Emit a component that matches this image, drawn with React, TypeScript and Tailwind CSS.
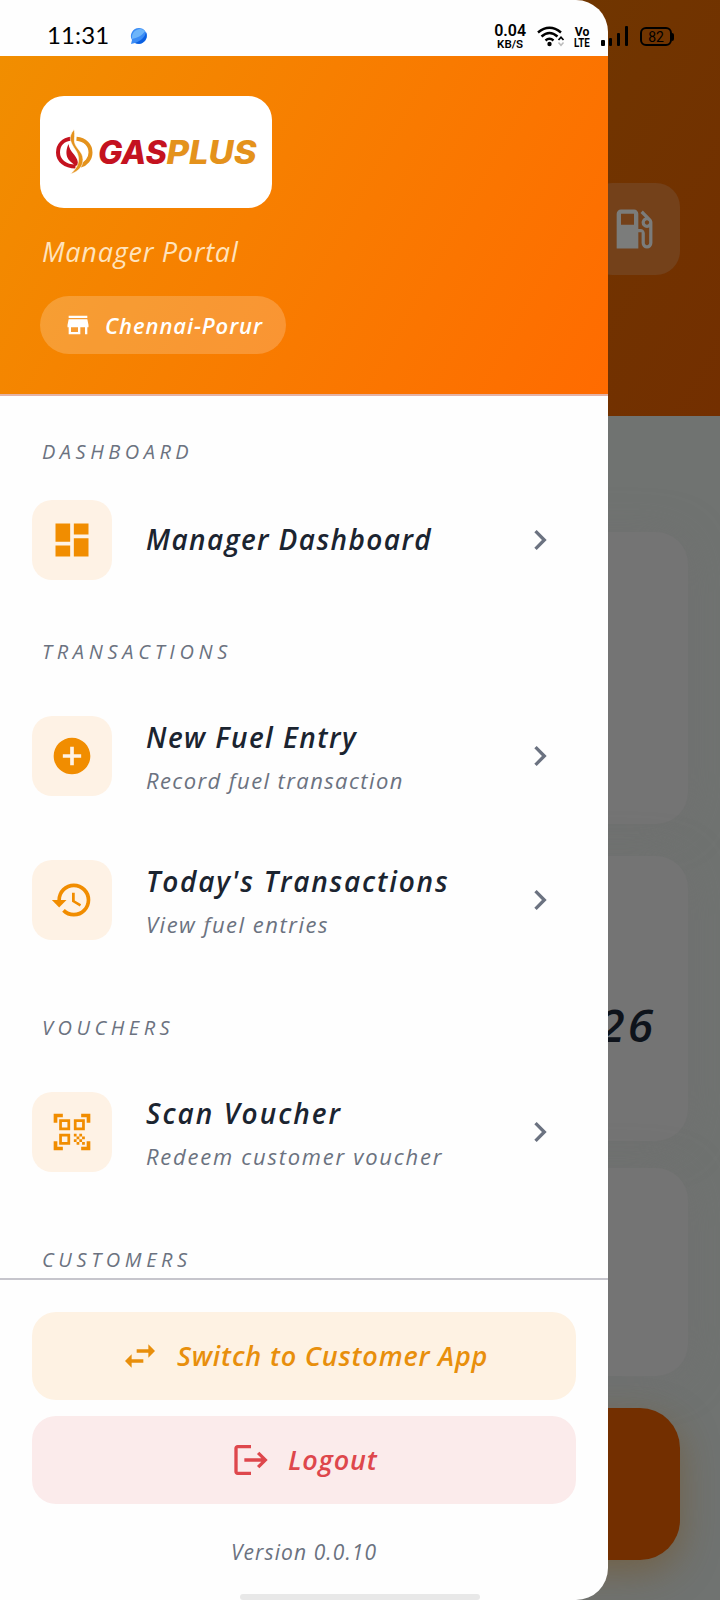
import type { ReactNode } from "react";
import clsx from "clsx";
import type { IconType } from "react-icons";
import {
  MdAddCircle,
  MdChevronRight,
  MdDashboard,
  MdHistory,
  MdLocalGasStation,
  MdLogout,
  MdQrCodeScanner,
  MdStore,
  MdSwapHoriz
} from "react-icons/md";

type MenuItem = {
  title: string;
  titleTracking: string;
  subtitle?: string;
  subtitleTracking?: string;
  icon: IconType;
};

type MenuSection = {
  heading: string;
  tracking: string;
  items: MenuItem[];
};

const sections: MenuSection[] = [
  {
    heading: "DASHBOARD",
    tracking: "tracking-[4.5px]",
    items: [{ title: "Manager Dashboard", titleTracking: "tracking-[1.4px]", icon: MdDashboard }]
  },
  {
    heading: "TRANSACTIONS",
    tracking: "tracking-[4.7px]",
    items: [
      {
        title: "New Fuel Entry",
        titleTracking: "tracking-[1.45px]",
        subtitle: "Record fuel transaction",
        subtitleTracking: "tracking-[1.4px]",
        icon: MdAddCircle
      },
      {
        title: "Today's Transactions",
        titleTracking: "tracking-[1.8px]",
        subtitle: "View fuel entries",
        subtitleTracking: "tracking-[1.5px]",
        icon: MdHistory
      }
    ]
  },
  {
    heading: "VOUCHERS",
    tracking: "tracking-[4.5px]",
    items: [
      {
        title: "Scan Voucher",
        titleTracking: "tracking-[2px]",
        subtitle: "Redeem customer voucher",
        subtitleTracking: "tracking-[1.75px]",
        icon: MdQrCodeScanner
      }
    ]
  },
  { heading: "CUSTOMERS", tracking: "tracking-[4.6px]", items: [] }
];

function GasPlusLogo() {
  return (
    <svg viewBox="0 0 204 48" className="h-12 w-[204px]" aria-label="GASPLUS">
      <path d="M17.5 10.500C9 11.500 4 17 4 24.500C4 32.500 11 38.500 21.500 38.500" fill="none" stroke="#c4121f" strokeWidth="4" />
      <path
        d="M14.500 16c-2.500 5-3 11 0 15.500 2 2.800 4.500 4 7 6.500l2.500-1c.5-4-1.500-7-4-10.500-3-3.300-5-6.500-5.500-10.500z"
        fill="#c4121f"
      />
      <path d="M22.500 10.800C31 11.500 36.500 17 36.500 24.500C36.500 31 32 36 26.500 37.500" fill="none" stroke="#e4921c" strokeWidth="4" />
      <path
        d="M20 1.500c-3.500 4-4.500 8-3 12.500 2 6 7 9 7.500 16.500.3 6-2.500 10.500-8 15.500 8-2.500 12.500-7.500 12.500-14.500 0-8-7.500-11-8.500-17.500-.6-4 1-7-.5-12.500z"
        fill="#e4921c"
        stroke="#fff"
        strokeWidth="0.6"
      />
      <text
        x="44"
        y="36"
        textLength="69"
        lengthAdjust="spacingAndGlyphs"
        className="fill-[#c4121f] font-['Inter'] text-[32px] font-extrabold italic"
      >
        GAS
      </text>
      <text
        x="112.500"
        y="36"
        textLength="90"
        lengthAdjust="spacingAndGlyphs"
        className="fill-[#e4921c] font-['Inter'] text-[32px] font-extrabold italic"
      >
        PLUS
      </text>
    </svg>
  );
}

function StatusBar() {
  return (
    <div className="absolute inset-x-0 top-0 z-20 flex h-14 items-start text-black">
      <span className="ml-[47px] mt-[19px] w-[62px] font-['Lato',sans-serif] text-[24px] leading-8 tracking-[0.1px]">
        11:31
      </span>
      <svg viewBox="0 0 18 18" className="ml-[21px] mt-[27px] size-[18px]">
        <path d="M9 1a8 8 0 1 1-4 15l-4 1 1-4A8 8 0 0 1 9 1z" fill="#3b8cf5" />
        <path d="M16 5c-1 6-6 9-11 11 7 3 14-4 11-11z" fill="#0b5fe0" />
        <path d="M2 9a8 8 0 0 1 13-5C12 9 7 11 2 12z" fill="#6db5fa" />
      </svg>
      <div className="ml-auto mr-[46px] flex items-start">
        <div className="mt-[22px] w-9 text-center font-['Roboto',sans-serif] font-semibold">
          <p className="text-[16px] leading-[17px]">0.04</p>
          <p className="text-[11.500px] leading-[10px]">KB/S</p>
        </div>
        <svg viewBox="0 0 28 21" className="ml-[9px] mt-[26px] h-[21px] w-7" fill="none">
          <path
            d="M1 6.500Q12.500-3 24 6.500M4.500 10.500q8-7 16 0M8.500 14.500q4-3.500 8 0"
            stroke="currentColor"
            strokeWidth="2.500"
          />
          <circle cx="12.500" cy="18" r="2.200" fill="currentColor" />
          <path d="m21.500 14 2.500-2.800 2.500 2.800" stroke="currentColor" strokeWidth="1.700" />
          <path d="m21.500 16.500 2.500 2.800 2.500-2.800" stroke="#bbb" strokeWidth="1.500" />
        </svg>
        <div className="ml-[8px] mt-[26px] flex w-[18px] flex-col items-center font-['Roboto',sans-serif] text-[13.500px] font-bold leading-[10.500px]">
          <span className="scale-x-90">Vo</span>
          <span className="scale-x-[0.72]">LTE</span>
        </div>
        <div className="ml-[10px] mt-[26px] flex h-5 items-end gap-[4.300px]">
          <span className="h-1.5 w-[3.500px] rounded-[1px] bg-black" />
          <span className="h-2 w-[3.500px] rounded-[1px] bg-black" />
          <span className="h-[13px] w-[3.500px] rounded-[1px] bg-black" />
          <span className="h-5 w-[3.500px] rounded-[1px] bg-black" />
        </div>
        <div className="ml-3 mt-[27px] flex items-center">
          <span className="flex h-[19px] w-[32px] items-center justify-center rounded-[6px] border-2 border-black font-['Roboto',sans-serif] text-[14px] leading-none">
            82
          </span>
          <span className="h-2 w-[2px] rounded-r-full bg-black" />
        </div>
      </div>
    </div>
  );
}

// Dashboard screen that stays visible behind the drawer scrim
function DimmedDashboard() {
  return (
    <div className="flex h-full flex-col items-end bg-[#707371]">
      <div className="flex h-[416px] w-full justify-end bg-linear-[120deg] from-[#6c4000] to-[#732f00] pr-10 pt-[183px]">
        <div className="flex h-[92px] w-[92px] items-center justify-center rounded-3xl bg-[#74411a] text-[#7b7c7b]">
          <MdLocalGasStation className="size-[52px]" />
        </div>
      </div>
      <div className="mr-8 mt-[116px] h-[292px] w-[656px] rounded-[32px] bg-[#747474] shadow-[0_4px_40px_rgba(112,112,112,0.9)]" />
      <div className="mr-8 mt-8 flex h-[285px] w-[656px] items-end justify-end rounded-[32px] bg-[#747474] pb-[87px] pr-8 shadow-[0_4px_40px_rgba(112,112,112,0.9)]">
        <span className="font-['Open_Sans',sans-serif] text-[46px] font-semibold italic leading-[60px] tracking-[3px] text-[#0e131b]">
          26
        </span>
      </div>
      <div className="mr-8 mt-[27px] h-[208px] w-[656px] rounded-[32px] bg-[#747474] shadow-[0_4px_40px_rgba(112,112,112,0.9)]" />
      <div className="mr-10 mt-8 h-[152px] w-[640px] rounded-[40px] bg-[#732f00] shadow-[0_12px_36px_rgba(115,80,30,0.5)]" />
    </div>
  );
}

function DrawerHeader() {
  return (
    <header className="h-[340px] border-b-2 border-[#e2b3a8] bg-linear-[119deg] from-[#f18e00] to-[#ff6b00] px-10 pt-10">
      <div className="flex h-28 w-[232px] items-center justify-center rounded-3xl bg-white">
        <GasPlusLogo />
      </div>
      <p className="mt-6 pl-0.5 text-[27px] font-medium leading-10 tracking-[0.75px] text-[#ffe3bd]">Manager Portal</p>
      <div className="mt-6 flex h-[58px] w-[246px] items-center rounded-full bg-white/20 pl-6 text-white">
        <MdStore className="size-7" />
        <span className="ml-[13px] text-[22px] font-semibold tracking-[0.9px]">Chennai-Porur</span>
      </div>
    </header>
  );
}

function MenuRow({ item }: { item: MenuItem }) {
  const Icon = item.icon;

  return (
    <div className={clsx("flex items-center pl-8 pr-12", item.subtitle ? "h-36" : "h-28")}>
      <div className="flex size-20 shrink-0 items-center justify-center rounded-[20px] bg-[#fef2e5] text-[#f18d00]">
        <Icon className="size-11" />
      </div>
      <div className={clsx("ml-[34px] flex-1 whitespace-nowrap", item.subtitle ? "pt-2" : "pb-0.5")}>
        <p className={clsx("text-[28px] font-semibold leading-10 text-[#1b2430]", item.titleTracking)}>
          {item.title}
        </p>
        {item.subtitle ? (
          <p className={clsx("text-[22px] font-medium leading-[47px] text-[#6b7280]", item.subtitleTracking)}>
            {item.subtitle}
          </p>
        ) : null}
      </div>
      <MdChevronRight className="size-10 shrink-0 text-[#6b7280]" />
    </div>
  );
}

function FooterButton({ className, children }: { className: string; children: ReactNode }) {
  return (
    <button
      type="button"
      className={clsx(
        "flex h-[88px] w-full shrink-0 items-center whitespace-nowrap rounded-3xl text-[27px] font-semibold italic",
        className
      )}
    >
      {children}
    </button>
  );
}

export default function App() {
  return (
    <div className="relative h-[1600px] w-[720px] overflow-hidden">
      <DimmedDashboard />
      <aside className="absolute inset-y-0 left-0 flex w-[608px] flex-col overflow-hidden rounded-r-[32px] bg-[#fefefe] pt-14 font-['Open_Sans',sans-serif] italic">
        <DrawerHeader />
        <nav className="min-h-0 flex-1 overflow-hidden">
          {sections.map((section) => (
            <section key={section.heading} className="pt-9">
              <h2
                className={clsx(
                  "mb-3 h-10 pl-[42px] text-[20px] font-medium leading-10 text-[#6b7280]",
                  section.tracking
                )}
              >
                {section.heading}
              </h2>
              {section.items.map((item) => (
                <MenuRow key={item.title} item={item} />
              ))}
            </section>
          ))}
        </nav>
        <footer className="flex h-[322px] shrink-0 flex-col border-t-2 border-[#c6c5cc] px-8 pt-8">
          <FooterButton className="bg-[#fef2e3] pl-[88px] text-[#e88f0c]">
            <MdSwapHoriz className="size-10" />
            <span className="ml-[17px] tracking-[0.8px]">Switch to Customer App</span>
          </FooterButton>
          <FooterButton className="mt-4 bg-[#fbebeb] pl-[199px] text-[#de474c]">
            <MdLogout className="size-10" />
            <span className="ml-[17px] tracking-[0.8px]">Logout</span>
          </FooterButton>
          <p className="mt-7 text-center text-[21px] font-medium leading-10 tracking-[1.1px] text-[#6b7280]">
            Version 0.0.10
          </p>
          <div className="mx-auto mt-auto h-1.5 w-60 translate-x-14 rounded-full bg-[#e8e8e8]" />
        </footer>
      </aside>
      <StatusBar />
    </div>
  );
}
